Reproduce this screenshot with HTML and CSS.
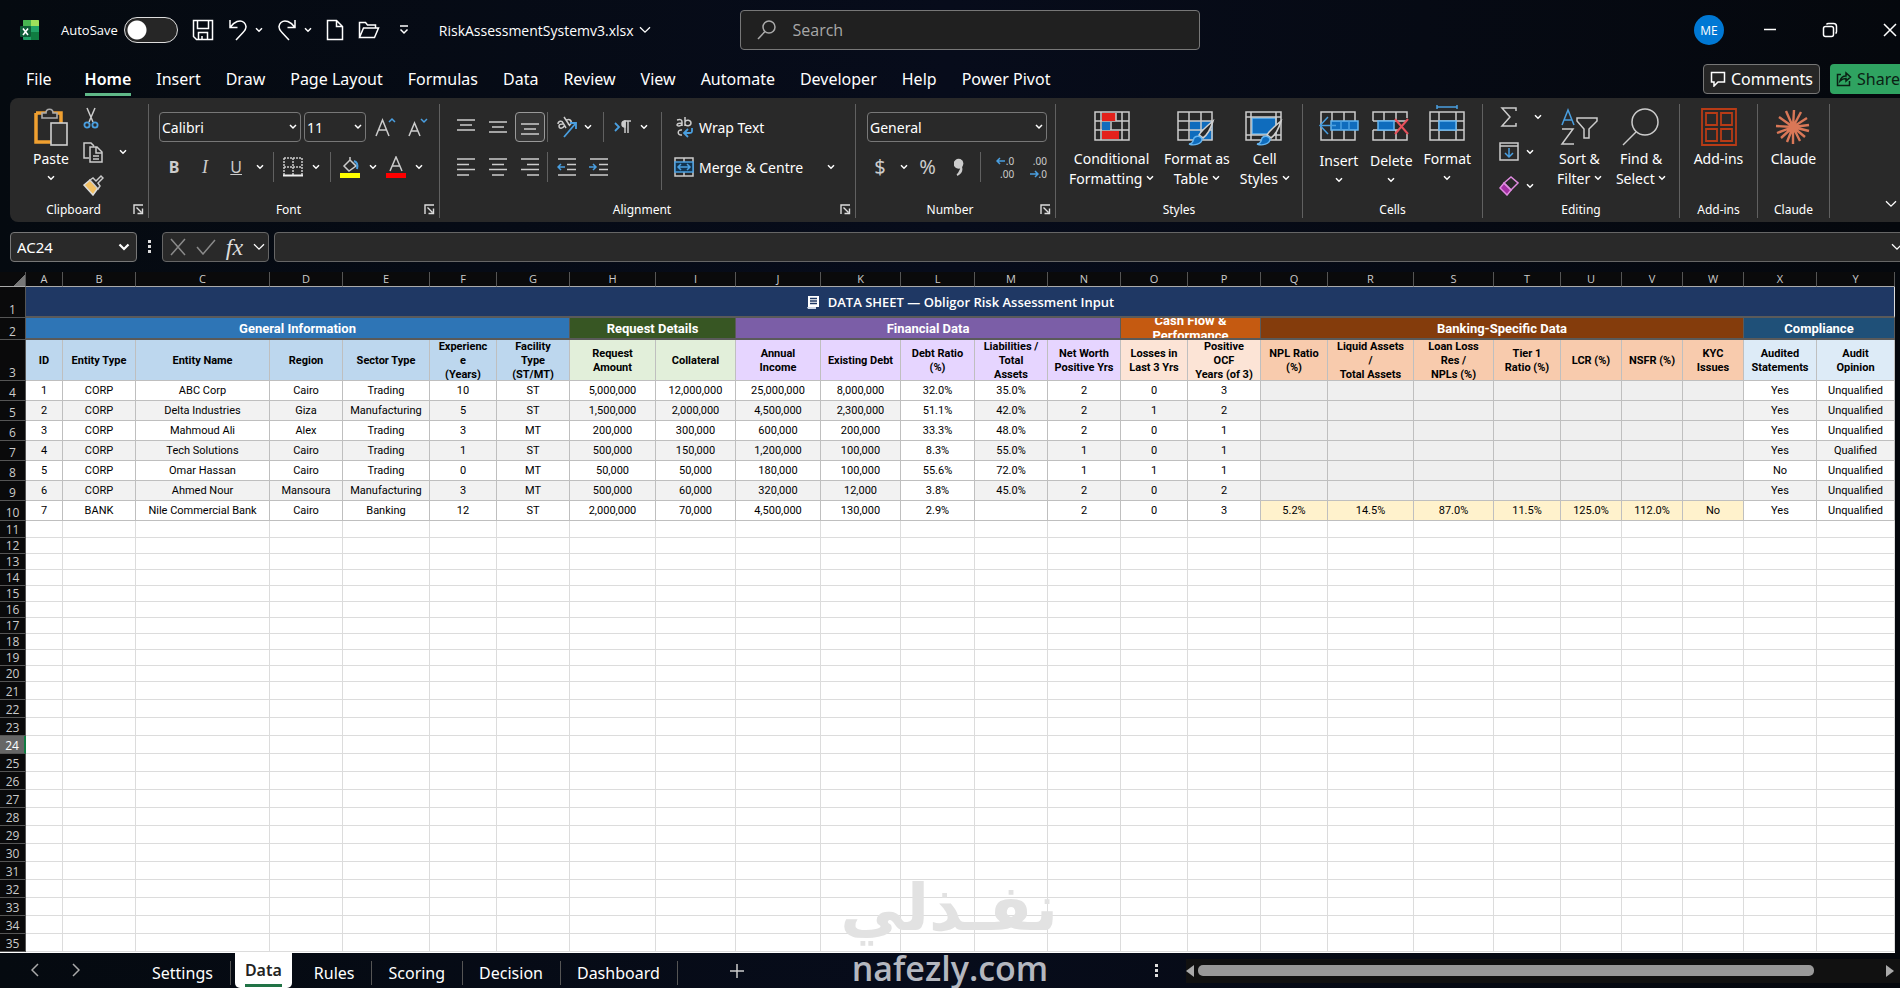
FILE: index.html
```html
<!DOCTYPE html>
<html lang="en">
<head>
    <meta charset="UTF-8">
    <meta name="viewport" content="width=device-width, initial-scale=1.0">
    <title>RiskAssessmentSystemv3.xlsx</title>
    <link rel="stylesheet" href="styles.css">
</head>
<body>
    <svg class="sprite" aria-hidden="true">
        <symbol id="chev" viewBox="0 0 8 6"><path d="M1 1.2l3 3 3-3" fill="none" stroke="currentColor" stroke-width="1.5"/></symbol>
        <symbol id="chev-lg" viewBox="0 0 12 8"><path d="M1 1.2l5 5 5-5" fill="none" stroke="currentColor" stroke-width="1.3"/></symbol>
        <symbol id="launch" viewBox="0 0 11 11"><path d="M1 10V1h9M3.500 3.500l5 5M9.500 4.500v5h-5" fill="none" stroke="currentColor" stroke-width="1.4"/></symbol>
        <symbol id="brush" viewBox="0 0 28 28"><path d="M26 2c-6 5-12 10-14 14l4 3C20 16 24 9 26 2z" fill="#292929" stroke="#d0d0d0" stroke-width="1.600"/><path d="M2 25c4 0 4-3 5-6 2-3 7-2 8 1 0 5-8 7-13 5z" fill="#0f6cbd" stroke="#65b5f0" stroke-width="1.400"/></symbol>
    </svg>

    <header class="titlebar">
        <svg class="logo" width="20" height="22" viewBox="0 0 20 22"><rect x="3" y="1" width="16" height="20" rx="1" fill="#21a366"/><path d="M11 1h7a1 1 0 0 1 1 1v5h-8z" fill="#9ee05b"/><path d="M3 2a1 1 0 0 1 1-1h7v6H3z" fill="#46b450"/><path d="M11 13h8v7a1 1 0 0 1-1 1h-7z" fill="#107c41"/><rect x="0" y="7" width="11" height="11" rx="1" fill="#0e5c36"/><path d="M3 9.500l5 6.500M8 9.500L3 16" stroke="#fff" stroke-width="1.600"/></svg>
        <label class="autosave">AutoSave <input type="checkbox" class="toggle"></label>
        <button class="tool" aria-label="Save"><svg width="22" height="22" viewBox="0 0 22 22"><path d="M1.500 1.500h19v19h-16l-3-3zM5.500 1.500v8h11v-8M6.500 20.500v-7h9v7M10 17v3"/></svg></button>
        <button class="tool" aria-label="Undo"><svg width="20" height="22" viewBox="0 0 20 22"><path d="M2 1v7.500h7.500M2.500 8C6 3 12 0 16 3.500c4 4 1 8-1 10L8 21"/></svg><svg class="chev"><use href="#chev"/></svg></button>
        <button class="tool" aria-label="Redo"><svg width="20" height="22" viewBox="0 0 20 22"><path d="M18 1v7.500h-7.500M17.500 8C14 3 8 0 4 3.500c-4 4-1 8 1 10L12 21"/></svg><svg class="chev"><use href="#chev"/></svg></button>
        <button class="tool" aria-label="New"><svg width="18" height="22" viewBox="0 0 18 22"><path d="M1.500 1.500h9l6 6v13h-15zM10.500 1.500v6h6"/></svg></button>
        <button class="tool open" aria-label="Open"><svg width="22" height="18" viewBox="0 0 22 18"><path d="M1.500 16V1.500h6l2 2.500h8v3M1.500 16.500L5.500 7h15l-4 9.500z"/></svg></button>
        <button class="tool more" aria-label="Customise toolbar"><svg width="12" height="10" viewBox="0 0 12 10"><path d="M2 1h8M2.500 4.500L6 8l3.500-3.500"/></svg></button>
        <button class="filename">RiskAssessmentSystemv3.xlsx <svg class="chev-lg"><use href="#chev-lg"/></svg></button>
        <label class="search">
            <svg width="20" height="20" viewBox="0 0 20 20"><circle cx="12" cy="7" r="6"/><path d="M8 11.500L1 19"/></svg>
            <input type="search" placeholder="Search" aria-label="Search">
        </label>
        <button class="avatar">ME</button>
        <button class="win" aria-label="Minimise"><svg width="16" height="16" viewBox="0 0 16 16"><path d="M2 7.500h12"/></svg></button>
        <button class="win" aria-label="Restore"><svg width="16" height="16" viewBox="0 0 16 16"><rect x="1.500" y="4.500" width="10" height="10" rx="2"/><path d="M4.500 2.500c.5-1 1-1 2-1h5c2 0 3 1 3 3v5c0 1 0 1.500-1 2"/></svg></button>
        <button class="win" aria-label="Close"><svg width="16" height="16" viewBox="0 0 16 16"><path d="M2 2l12 12M14 2L2 14"/></svg></button>
    </header>

    <nav class="menu">
        <a href="#">File</a>
        <a href="#" class="active">Home</a>
        <a href="#">Insert</a>
        <a href="#">Draw</a>
        <a href="#">Page Layout</a>
        <a href="#">Formulas</a>
        <a href="#">Data</a>
        <a href="#">Review</a>
        <a href="#">View</a>
        <a href="#">Automate</a>
        <a href="#">Developer</a>
        <a href="#">Help</a>
        <a href="#">Power Pivot</a>
        <div class="actions">
            <button class="comments"><svg width="16" height="16" viewBox="0 0 16 16"><path d="M1.500 1.500h13v9.500H8l-4 4v-4H1.500z"/></svg>Comments</button>
            <button class="share"><svg width="16" height="16" viewBox="0 0 16 16"><path d="M5 3.500H1.500v11h12V10M4 10c1-4 3-5 6-5V2l4.500 4-4.500 4V7.500C7 7.500 6 8 4 10z"/></svg>Share</button>
        </div>
    </nav>

    <section class="ribbon">
        <div class="group clipboard">
            <div class="body">
                <button class="big"><svg width="36" height="38" viewBox="0 0 36 38"><path d="M3 5h25v13M3 5v29h15" fill="none" stroke="#f0a030" stroke-width="3.500"/><path d="M9 10V5h4c0-5 7-5 7 0h4v5z" fill="#292929" stroke="#aaa" stroke-width="1.600"/><rect x="18" y="15" width="16" height="22" fill="#333" stroke="#d0d0d0" stroke-width="1.600"/></svg><span>Paste</span><svg class="chev"><use href="#chev"/></svg></button>
                <div class="stack">
                    <button class="ico" aria-label="Cut"><svg width="18" height="22" viewBox="0 0 18 22"><path d="M5 1l6 14M13 1L7 15" stroke="#ccc"/><g stroke="#4a9fe0" stroke-width="1.800"><circle cx="5" cy="18" r="2.600"/><circle cx="13" cy="18" r="2.600"/></g></svg></button>
                    <button class="ico" aria-label="Copy"><svg width="22" height="22" viewBox="0 0 22 22"><path d="M7 17H2V2h7l3 3M8 6h7l5 5v10H8zM14 6v6h6M11 15h6M11 18h6" stroke="#ccc"/></svg><svg class="chev"><use href="#chev"/></svg></button>
                    <button class="ico" aria-label="Format painter"><svg width="22" height="22" viewBox="0 0 22 22"><path d="M2 11l6-5 8 8-5 7z" fill="#f2c063" stroke="#ddd"/><path d="M8 6l3-2 3 3 5-5 2 2-5 5 2 3-2 3z" fill="#292929" stroke="#ccc"/></svg></button>
                </div>
            </div>
            <div class="caption"><span>Clipboard</span><svg class="launch"><use href="#launch"/></svg></div>
        </div>

        <div class="group font">
            <div class="body rows">
                <div class="row">
                    <select class="face" aria-label="Font"><option>Calibri</option></select>
                    <select class="size" aria-label="Font size"><option>11</option></select>
                    <button class="ico wide" aria-label="Increase font size"><svg width="22" height="22" viewBox="0 0 22 22"><path d="M2 20L8.500 4 15 20M4.500 14h8" stroke="#ccc"/><path d="M15 6l3-3 3 3" stroke="#4a9fe0"/></svg></button>
                    <button class="ico wide" aria-label="Decrease font size"><svg width="22" height="22" viewBox="0 0 22 22"><path d="M3 20L8.500 7 14 20M5.500 15h6" stroke="#ccc"/><path d="M15 3l3 3 3-3" stroke="#4a9fe0"/></svg></button>
                </div>
                <div class="row styles-row">
                    <button class="letter"><b>B</b></button>
                    <button class="letter"><i>I</i></button>
                    <button class="letter"><u>U</u></button>
                    <svg class="chev"><use href="#chev"/></svg>
                    <span class="bar"></span>
                    <button class="ico" aria-label="Borders"><svg width="20" height="20" viewBox="0 0 20 20"><path d="M1 1h18v17M1 1v17M10 1v17M1 10h18" stroke="#ccc" stroke-dasharray="2 1"/><path d="M0 18.500h20" stroke="#eee" stroke-width="2"/></svg></button>
                    <svg class="chev"><use href="#chev"/></svg>
                    <span class="bar"></span>
                    <button class="ico" aria-label="Fill colour"><svg width="20" height="22" viewBox="0 0 20 22"><path d="M4 10l6-6 6 6-7 5zM10 4V1" stroke="#ccc"/><path d="M14 5c3 1 4 4 3 8" stroke="#4a9fe0" stroke-width="2"/><path d="M0 19.500h20" stroke="#ff0" stroke-width="5"/></svg></button>
                    <svg class="chev"><use href="#chev"/></svg>
                    <button class="ico" aria-label="Font colour"><svg width="20" height="22" viewBox="0 0 20 22"><path d="M4 15L10 1l6 14M6.500 10h7" stroke="#ccc"/><path d="M0 19.500h20" stroke="#f00" stroke-width="5"/></svg></button>
                    <svg class="chev"><use href="#chev"/></svg>
                </div>
            </div>
            <div class="caption"><span>Font</span><svg class="launch"><use href="#launch"/></svg></div>
        </div>

        <div class="group align">
            <div class="body">
                <div class="rows">
                    <div class="row">
                        <button class="sq" aria-label="Top align"><svg width="18" height="18" viewBox="0 0 18 18"><path d="M0 2h18M3 7h12M0 12h18"/></svg></button>
                        <button class="sq" aria-label="Middle align"><svg width="18" height="18" viewBox="0 0 18 18"><path d="M0 4h18M3 9h12M0 14h18"/></svg></button>
                        <button class="sq on" aria-label="Bottom align"><svg width="18" height="18" viewBox="0 0 18 18"><path d="M0 6h18M3 11h12M0 16h18"/></svg></button>
                        <span class="bar"></span>
                        <button class="sq" aria-label="Orientation"><svg width="22" height="22" viewBox="0 0 22 22"><path d="M2 8c0-3 4-4 5-1l3 5M8 10c-1 3-5 3-5 0 0-2 2-2 4-2M8 1l6 9M10 5c2-3 6-1 5 2 0 2-2 2-3 1"/><path d="M8 21L20 7M14 7h6v6" stroke="#4a9fe0" stroke-width="1.800"/></svg></button>
                        <svg class="chev"><use href="#chev"/></svg>
                        <span class="bar"></span>
                        <button class="sq" aria-label="Text direction"><svg width="18" height="16" viewBox="0 0 18 16"><path d="M1 4l4 4-4 4" stroke="#4a9fe0" stroke-width="1.800"/><path d="M11 14V2h6M14 2v12"/><path d="M11 2a3 3 0 0 0 0 6z" fill="#ccc"/></svg></button>
                        <svg class="chev"><use href="#chev"/></svg>
                    </div>
                    <div class="row">
                        <button class="sq" aria-label="Align left"><svg width="18" height="18" viewBox="0 0 18 18"><path d="M0 1h18M0 6.500h12M0 11.500h18M0 17h12"/></svg></button>
                        <button class="sq" aria-label="Centre"><svg width="18" height="18" viewBox="0 0 18 18"><path d="M0 1h18M3 6.500h12M0 11.500h18M3 17h12"/></svg></button>
                        <button class="sq" aria-label="Align right"><svg width="18" height="18" viewBox="0 0 18 18"><path d="M0 1h18M6 6.500h12M0 11.500h18M6 17h12"/></svg></button>
                        <span class="bar"></span>
                        <button class="sq" aria-label="Decrease indent"><svg width="20" height="18" viewBox="0 0 20 18"><path d="M1 1h18M10 6.500h9M10 11.500h9M1 17h18"/><path d="M8 9H1M4 6L1 9l3 3" stroke="#4a9fe0"/></svg></button>
                        <button class="sq" aria-label="Increase indent"><svg width="20" height="18" viewBox="0 0 20 18"><path d="M1 1h18M10 6.500h9M10 11.500h9M1 17h18"/><path d="M0 9h7M4 6l3 3-3 3" stroke="#4a9fe0"/></svg></button>
                    </div>
                </div>
                <span class="bar tall"></span>
                <div class="rows wrap">
                    <div class="row">
                        <button class="text"><svg width="20" height="22" viewBox="0 0 20 22"><path d="M3 4c4-1 5 0 5 2v4M8 7c-6 0-6 3-3 3 1 0 3-1 3-3M11 1v9M11 6c1-3 6-2 6 1s-5 4-6 1M8 14c-5-1-5 6 0 5" stroke="#ccc"/><path d="M18 12v3c0 2-1 2-3 2h-4M14 13l-4 4 4 4" stroke="#4a9fe0" stroke-width="1.800"/></svg>Wrap Text</button>
                    </div>
                    <div class="row">
                        <button class="text"><svg width="20" height="20" viewBox="0 0 20 20"><path d="M1 1h18v18H1zM10 1v4M10 15v4" stroke="#ccc"/><path d="M1 5h18v10H1z" fill="#13344f" stroke="#4a9fe0"/><path d="M4 10h12M7 7l-3 3 3 3M13 7l3 3-3 3" stroke="#4a9fe0"/></svg>Merge &amp; Centre</button>
                        <svg class="chev far"><use href="#chev"/></svg>
                    </div>
                </div>
            </div>
            <div class="caption"><span>Alignment</span><svg class="launch"><use href="#launch"/></svg></div>
        </div>

        <div class="group number">
            <div class="body rows">
                <div class="row"><select aria-label="Number format"><option>General</option></select></div>
                <div class="row">
                    <button class="glyph">$</button>
                    <svg class="chev"><use href="#chev"/></svg>
                    <button class="glyph pct">%</button>
                    <button class="sq" aria-label="Comma style"><svg width="12" height="18" viewBox="0 0 12 18"><path d="M3 17c4-2 5-5 4-8M6 2a4 4 0 1 0 1 7l1-2a4 4 0 0 0-2-5z" fill="#ccc" stroke-width="2"/></svg></button>
                    <span class="bar"></span>
                    <button class="sq decimal" aria-label="Increase decimal"><span><svg width="10" height="8" viewBox="0 0 10 8"><path d="M9 4H1M4 1L1 4l3 3"/></svg>.0</span><span>.00</span></button>
                    <button class="sq decimal" aria-label="Decrease decimal"><span>.00</span><span><svg width="10" height="8" viewBox="0 0 10 8"><path d="M1 4h8M6 1l3 3-3 3"/></svg>.0</span></button>
                </div>
            </div>
            <div class="caption"><span>Number</span><svg class="launch"><use href="#launch"/></svg></div>
        </div>

        <div class="group styles">
            <div class="body">
                <button class="big"><svg width="36" height="30" viewBox="0 0 36 30"><path d="M1 1h34v28H1zM1 10h34M1 19h34M7 1v28M28 1v28" stroke="#ccc"/><path d="M8 2h14v8H8zM8 20h17v8H8z" fill="#e3211b"/><path d="M8 11h8v8H8z" fill="#0f6cbd"/><path d="M22 2v8M17 11v8" stroke="#ccc"/></svg><span>Conditional<br>Formatting <svg class="chev"><use href="#chev"/></svg></span></button>
                <button class="big"><svg width="40" height="36" viewBox="0 0 40 36"><path d="M13 10h23v19H13z" fill="#0f6cbd"/><path d="M1 1h34v28H1zM1 10h34M1 19h34M12 1v28M24 1v28" stroke="#ccc"/><use href="#brush" x="10" y="8" width="28" height="28"/></svg><span>Format as<br>Table <svg class="chev"><use href="#chev"/></svg></span></button>
                <button class="big"><svg width="40" height="36" viewBox="0 0 40 36"><path d="M7 7h24v16H7z" fill="#0f6cbd" stroke="#65b5f0"/><path d="M1 1h35v28H1zM1 6h35M6 1v28M31 1v28M1 24h35" stroke="#ccc"/><use href="#brush" x="10" y="8" width="28" height="28"/></svg><span>Cell<br>Styles <svg class="chev"><use href="#chev"/></svg></span></button>
            </div>
            <div class="caption"><span>Styles</span></div>
        </div>

        <div class="group cells">
            <div class="body">
                <button class="big"><svg width="40" height="30" viewBox="0 0 40 30"><path d="M2 1h34v28H2zM13 1v28M25 1v28" stroke="#ccc"/><path d="M12 10h27v9H12z" fill="#0f6cbd" stroke="#65b5f0"/><path d="M1 14.500h16M9 6l-8 8.500L9 23M22 10v9M30 10v9" stroke="#4a9fe0"/></svg><span>Insert</span><svg class="chev"><use href="#chev"/></svg></button>
                <button class="big"><svg width="38" height="30" viewBox="0 0 38 30"><path d="M1 10V1h34v6M1 10h34M1 19v10h34v-6M1 19h26M12 1v9M24 1v9M12 19v10M24 19v10" stroke="#ccc"/><path d="M6 10h16v9H6z" fill="#0f6cbd" stroke="#65b5f0"/><path d="M23 8l13 15M36 8L23 23" stroke="#e8515b" stroke-width="2"/></svg><span>Delete</span><svg class="chev"><use href="#chev"/></svg></button>
                <button class="big fmt"><svg width="36" height="36" viewBox="0 0 36 36"><path d="M1 7h34v28H1zM1 16h34M1 25h34M10 7v28M27 7v28" stroke="#ccc"/><path d="M10 16h17v9H10z" fill="#0f6cbd" stroke="#65b5f0"/><path d="M8 2h20M8 0v4M28 0v4" stroke="#4a9fe0"/></svg><span>Format</span><svg class="chev"><use href="#chev"/></svg></button>
            </div>
            <div class="caption"><span>Cells</span></div>
        </div>

        <div class="group editing">
            <div class="body">
                <div class="stack">
                    <button class="ico" aria-label="Sum"><svg width="20" height="20" viewBox="0 0 20 20"><path d="M17 4V1H3l8 9-8 9h14v-3" stroke="#ccc"/></svg><svg class="chev"><use href="#chev"/></svg></button>
                    <button class="ico" aria-label="Fill"><svg width="20" height="20" viewBox="0 0 20 20"><path d="M1 1h18v17H1zM1 4h18" stroke="#ccc"/><path d="M10 6v9M6 11l4 4 4-4" stroke="#4a9fe0"/></svg><svg class="chev"><use href="#chev"/></svg></button>
                    <button class="ico" aria-label="Clear"><svg width="20" height="20" viewBox="0 0 20 20"><path d="M1 12l4-5 7 7-4 5z" fill="#a42fa4" stroke="#e08be0"/><path d="M5 7l7-6 7 6-7 7z" stroke="#e08be0"/></svg><svg class="chev"><use href="#chev"/></svg></button>
                </div>
                <button class="big"><svg width="38" height="38" viewBox="0 0 38 38"><path d="M2 17L8 2l6 15M4 12h8" stroke="#4a9fe0"/><path d="M2 21h11L2 36h12M17 10h20v3l-8 8v9h-5v-9l-7-8z" stroke="#ccc"/></svg><span>Sort &amp;<br>Filter <svg class="chev"><use href="#chev"/></svg></span></button>
                <button class="big"><svg width="38" height="38" viewBox="0 0 38 38"><circle cx="23" cy="14" r="13" stroke="#ccc"/><path d="M14 24L1 37" stroke="#ccc"/></svg><span>Find &amp;<br>Select <svg class="chev"><use href="#chev"/></svg></span></button>
            </div>
            <div class="caption"><span>Editing</span></div>
        </div>

        <div class="group addins">
            <div class="body">
                <button class="big"><svg width="36" height="38" viewBox="0 0 36 38"><path d="M1 1h34v36H1zM5 5h11v12H5zM20 5h11v12H20zM5 21h11v12H5zM20 21h11v12H20z" stroke="#b83b16" stroke-width="1.800"/></svg><span>Add-ins</span></button>
            </div>
            <div class="caption"><span>Add-ins</span></div>
        </div>

        <div class="group claude">
            <div class="body">
                <button class="big"><svg width="36" height="38" viewBox="0 0 36 38"><path d="M18 19L11 3M18 19L19 2M18 19L26 4M18 19l14-9M18 19l16-2M18 19l16 4M18 19l12 10M18 19l7 14M18 19l0 17M18 19l-6 15M18 19L6 30M18 19L2 25M18 19L1 18M18 19L4 9" stroke="#d97757" stroke-width="2.400"/></svg><span>Claude</span></button>
            </div>
            <div class="caption"><span>Claude</span></div>
        </div>
        <button class="collapse" aria-label="Collapse ribbon"><svg class="chev-lg"><use href="#chev-lg"/></svg></button>
    </section>

    <section class="formula">
        <select class="cellname" aria-label="Name box"><option>AC24</option></select>
        <svg class="dots" width="3" height="14" viewBox="0 0 3 14"><path d="M0 0h3v3H0zM0 5h3v3H0zM0 10h3v3H0z"/></svg>
        <div class="fx">
            <svg width="16" height="18" viewBox="0 0 16 18"><path d="M1 1l14 16M15 1L1 17" stroke="#8a8a8a"/></svg>
            <svg width="20" height="16" viewBox="0 0 20 16"><path d="M1 8l6 7L19 1" stroke="#8a8a8a"/></svg>
            <i>fx</i>
            <svg class="chev-lg"><use href="#chev-lg"/></svg>
        </div>
        <label class="entry"><input type="text" aria-label="Formula bar"><svg class="chev-lg"><use href="#chev-lg"/></svg></label>
    </section>

    <main class="sheet">
        <table>
            <colgroup id="cols"></colgroup>
            <thead id="letters"></thead>
            <tbody id="grid"></tbody>
        </table>
    </main>

    <footer class="tabs">
        <div class="arrows">
            <button aria-label="Previous sheet"><svg width="8" height="14" viewBox="0 0 8 14"><path d="M7 1L1 7l6 6"/></svg></button>
            <button aria-label="Next sheet"><svg width="8" height="14" viewBox="0 0 8 14"><path d="M1 1l6 6-6 6"/></svg></button>
        </div>
        <button class="tab">Settings</button>
        <button class="tab current"><span>Data</span></button>
        <button class="tab">Rules</button>
        <button class="tab">Scoring</button>
        <button class="tab">Decision</button>
        <button class="tab">Dashboard</button>
        <button class="add" aria-label="New sheet"><svg width="14" height="14" viewBox="0 0 14 14"><path d="M7 0v14M0 7h14"/></svg></button>
        <svg class="dots" width="3" height="14" viewBox="0 0 3 14"><path d="M0 0h3v3H0zM0 5h3v3H0zM0 10h3v3H0z"/></svg>
        <div class="scroll">
            <svg width="8" height="12" viewBox="0 0 8 12"><path d="M8 0v12L0 6z"/></svg>
            <div class="track"><div class="thumb"></div></div>
            <svg width="8" height="12" viewBox="0 0 8 12"><path d="M0 0v12l8-6z"/></svg>
        </div>
    </footer>

    <div class="watermark">
        <div class="ar" lang="ar" dir="rtl">نفـذلي</div>
        <div class="site">nafezly.com</div>
    </div>

    <script>
        // last column takes the space that is left
        const widths = [26, 37, 73, 134, 73, 87, 67, 73, 86, 80, 85, 80, 74, 73, 73, 67, 73, 67, 86, 80, 67, 61, 61, 61, 73];
        const letters = "ABCDEFGHIJKLMNOPQRSTUVWXY".split("");

        const groups = [
            ["General Information", 7, "general"],
            ["Request Details", 2, "request"],
            ["Financial Data", 5, "financial"],
            ["Cash Flow &<br>Performance", 2, "cash"],
            ["Banking-Specific Data", 7, "banking"],
            ["Compliance", 2, "compliance"]
        ];

        const heads = ["ID", "Entity Type", "Entity Name", "Region", "Sector Type", "Experienc<br>e<br>(Years)", "Facility<br>Type<br>(ST/MT)",
            "Request<br>Amount", "Collateral",
            "Annual<br>Income", "Existing Debt", "Debt Ratio<br>(%)", "Liabilities /<br>Total<br>Assets", "Net Worth<br>Positive Yrs",
            "Losses in<br>Last 3 Yrs", "Positive<br>OCF<br>Years (of 3)",
            "NPL Ratio<br>(%)", "Liquid Assets<br>/<br>Total Assets", "Loan Loss<br>Res /<br>NPLs (%)", "Tier 1<br>Ratio (%)", "LCR (%)", "NSFR (%)", "KYC<br>Issues",
            "Audited<br>Statements", "Audit<br>Opinion"];

        const blank = ["", "", "", "", "", "", ""];
        const rows = [
            [1, "CORP", "ABC Corp", "Cairo", "Trading", 10, "ST", "5,000,000", "12,000,000", "25,000,000", "8,000,000", "32.0%", "35.0%", 2, 0, 3, ...blank, "Yes", "Unqualified"],
            [2, "CORP", "Delta Industries", "Giza", "Manufacturing", 5, "ST", "1,500,000", "2,000,000", "4,500,000", "2,300,000", "51.1%", "42.0%", 2, 1, 2, ...blank, "Yes", "Unqualified"],
            [3, "CORP", "Mahmoud Ali", "Alex", "Trading", 3, "MT", "200,000", "300,000", "600,000", "200,000", "33.3%", "48.0%", 2, 0, 1, ...blank, "Yes", "Unqualified"],
            [4, "CORP", "Tech Solutions", "Cairo", "Trading", 1, "ST", "500,000", "150,000", "1,200,000", "100,000", "8.3%", "55.0%", 1, 0, 1, ...blank, "Yes", "Qualified"],
            [5, "CORP", "Omar Hassan", "Cairo", "Trading", 0, "MT", "50,000", "50,000", "180,000", "100,000", "55.6%", "72.0%", 1, 1, 1, ...blank, "No", "Unqualified"],
            [6, "CORP", "Ahmed Nour", "Mansoura", "Manufacturing", 3, "MT", "500,000", "60,000", "320,000", "12,000", "3.8%", "45.0%", 2, 0, 2, ...blank, "Yes", "Unqualified"],
            [7, "BANK", "Nile Commercial Bank", "Cairo", "Banking", 12, "ST", "2,000,000", "70,000", "4,500,000", "130,000", "2.9%", "", 2, 0, 3, "5.2%", "14.5%", "87.0%", "11.5%", "125.0%", "112.0%", "No", "Yes", "Unqualified"]
        ];

        document.getElementById("cols").innerHTML = widths.map(w => `<col style="width:${w}px">`).join("") + "<col>";
        document.getElementById("letters").innerHTML =
            `<tr><th class="corner"></th>${letters.map(l => `<th>${l}</th>`).join("")}</tr>`;

        const pageIcon = '<svg width="14" height="15" viewBox="0 0 14 15"><path d="M2 1h11v11H2z" fill="#fff"/><path d="M1 12h9v2H2z" fill="#cfd8e6"/><path d="M4 3.500h7M4 6h7M4 8.500h7" stroke="#1f3864"/></svg>';
        let html = `<tr class="title"><th>1</th><td colspan="25">${pageIcon}DATA SHEET — Obligor Risk Assessment Input</td></tr>`;

        html += `<tr class="groups"><th>2</th>` +
            groups.map(g => `<td colspan="${g[1]}" class="${g[2]}"><div>${g[0]}</div></td>`).join("") + "</tr>";

        const kinds = groups.flatMap(g => Array(g[1]).fill(g[2]));
        html += `<tr class="heads"><th>3</th>` +
            heads.map((h, i) => `<td class="${kinds[i]}"><div>${h}</div></td>`).join("") + "</tr>";

        rows.forEach((row, r) => {
            html += `<tr class="data"><th>${r + 4}</th>` + row.map((v, i) => {
                let cls = "";
                if (kinds[i] === "banking") cls = v === "" ? "na" : "bank";
                if (i === 11) cls = "calc";
                return `<td class="${cls}">${v}</td>`;
            }).join("") + "</tr>";
        });

        for (let r = 11; r <= 35; r++) {
            const cls = r === 24 ? "empty selected" : r > 20 ? "empty" : r === 11 ? "first" : "short";
            html += `<tr class="${cls}"><th>${r}</th>${"<td></td>".repeat(25)}</tr>`;
        }
        document.getElementById("grid").innerHTML = html;
    </script>
</body>
</html>
```
FILE: styles.css
```css
* {
    box-sizing: border-box;
}

body {
    margin: 0;
    min-height: 100vh;
    display: flex;
    flex-direction: column;
    position: relative;
    overflow: hidden;
    font-family: "Noto Sans", "Open Sans", sans-serif;
    font-size: 14px;
    color: #fff;
    background: linear-gradient(90deg, #050a10, #070c1b 50%, #05080d);
}

button,
input,
select {
    font: inherit;
    color: inherit;
    background: none;
    border: 0;
    padding: 0;
    margin: 0;
}

svg {
    flex-shrink: 0;
    fill: none;
    stroke-width: 1.5;
}

.sprite {
    position: absolute;
    width: 0;
    height: 0;
}

.chev {
    width: 8px;
    height: 6px;
}

.chev-lg {
    width: 12px;
    height: 8px;
}

/* title bar */
.titlebar {
    display: flex;
    align-items: center;
    height: 60px;
    padding-left: 20px;
    font-family: "Open Sans", sans-serif;
}

.autosave {
    display: flex;
    align-items: center;
    gap: 6px;
    margin-left: 21px;
    font-size: 13px;
}

.toggle {
    appearance: none;
    width: 54px;
    height: 26px;
    border: 1px solid #ddd;
    border-radius: 13px;
    background: radial-gradient(circle at 12px 12px, #fff 9px, #262626 10px);
}

.tool {
    display: flex;
    align-items: center;
    gap: 7px;
    margin-left: 14px;
}

.tool svg {
    stroke: #fff;
}

.tool.more {
    margin-left: 18px;
    margin-right: 29px;
}

.filename {
    display: flex;
    align-items: center;
    gap: 5px;
}

.search {
    display: flex;
    align-items: center;
    gap: 16px;
    width: 460px;
    height: 40px;
    margin-left: 89px;
    padding: 0 16px;
    border: 1px solid #777;
    border-radius: 4px;
    background: #202020;
    font-size: 16px;
}

.search svg {
    stroke: #aaa;
}

.search input {
    flex: 1;
    outline: 0;
}

.search input::placeholder {
    color: #a8a8a8;
}

.avatar {
    width: 30px;
    height: 30px;
    margin-left: auto;
    margin-right: 38px;
    border-radius: 50%;
    background: #0078d4;
    font-size: 12px;
}

.win {
    margin-right: 44px;
    line-height: 0;
}

.win:last-child {
    margin-right: 2px;
}

.win svg {
    stroke: #fff;
}

/* ribbon tabs */
.menu {
    display: flex;
    align-items: center;
    height: 38px;
    padding-left: 26px;
    gap: 25px;
    font-size: 16px;
}

.menu a {
    color: #fff;
    text-decoration: none;
    line-height: 28px;
    padding-top: 2px;
    border-bottom: 3px solid transparent;
}

.menu .active {
    font-weight: 600;
    margin-left: 8px;
    border-color: #5fb888;
}

.actions {
    display: flex;
    gap: 10px;
    margin-left: auto;
    margin-right: -6px;
}

.comments,
.share {
    display: flex;
    align-items: center;
    gap: 5px;
    height: 30px;
    padding: 0 6px;
    border-radius: 4px;
}

.comments {
    border: 1px solid #777;
    background: #262626;
}

.comments svg {
    stroke: #fff;
}

.share {
    background: #2fa361;
    color: #0b2014;
}

.share svg {
    stroke: #0b2014;
}

/* ribbon */
.ribbon {
    display: flex;
    height: 124px;
    margin-left: 10px;
    padding: 6px 0 4px;
    border-radius: 8px 0 0 8px;
    background: #292929;
}

.group {
    display: flex;
    flex-direction: column;
    height: 114px;
    border-right: 1px solid #606060;
}

.body {
    display: flex;
    flex: 1;
}

.caption {
    display: flex;
    align-items: center;
    height: 18px;
    padding: 0 4px;
    font-size: 12px;
}

.caption span {
    flex: 1;
    text-align: center;
}

.launch {
    width: 11px;
    height: 11px;
    color: #ddd;
}

.clipboard { width: 139px; }
.font { width: 291px; }
.align { width: 416px; }
.number { width: 200px; }
.styles { width: 247px; }
.cells { width: 180px; }
.editing { width: 197px; }
.addins { width: 78px; }
.claude { width: 72px; }

.big {
    display: flex;
    flex-direction: column;
    align-items: center;
    line-height: 20px;
}

.big > svg:first-child {
    height: 38px;
    margin-top: 4px;
    margin-bottom: 3px;
}

.big .chev {
    margin-top: 6px;
}

.big span .chev {
    margin: 0 0 3px;
}

.big path,
.ico path {
    fill-rule: evenodd;
}

.stack {
    display: flex;
    flex-direction: column;
    justify-content: space-between;
    padding: 3px 0 4px;
}

.ico {
    display: flex;
    align-items: center;
    gap: 15px;
}

.clipboard .body {
    gap: 13px;
    padding-left: 23px;
}

.rows {
    display: flex;
    flex-direction: column;
    gap: 10px;
    padding-top: 8px;
}

.row {
    display: flex;
    align-items: center;
    height: 30px;
}

.row select,
.cellname {
    appearance: none;
    height: 30px;
    padding: 0 6px 0 2px;
    border: 1px solid #777;
    border-radius: 4px;
    background: #292929 url("data:image/svg+xml,%3Csvg xmlns='http://www.w3.org/2000/svg' viewBox='0 0 8 6' width='8' height='6'%3E%3Cpath d='M1 1l3 3 3-3' fill='none' stroke='white' stroke-width='1.5'/%3E%3C/svg%3E") no-repeat right 3px center;
}

.font .body {
    padding-left: 10px;
}

.row .face {
    width: 142px;
    margin-right: 3px;
}

.row .size {
    width: 62px;
}

.wide {
    margin-left: 8px;
    width: 24px;
}

.bar {
    width: 1px;
    height: 30px;
    background: #606060;
}

.bar.tall {
    height: 78px;
    margin-top: 8px;
}

.styles-row {
    justify-content: space-between;
    padding: 0 16px 0 4px;
}

.letter {
    width: 22px;
    font-size: 16px;
    color: #ccc;
}

.letter i,
.fx i {
    font-family: "Liberation Serif", serif;
    font-size: 18px;
}

.align .rows .row {
    gap: 2px;
}

.align .body > .rows {
    padding-left: 11px;
    width: 221px;
}

.align .body > .rows.wrap {
    padding-left: 12px;
    width: auto;
}

.sq {
    display: flex;
    align-items: center;
    justify-content: center;
    width: 30px;
    height: 30px;
}

.sq svg {
    stroke: #ccc;
}

.sq.on {
    border: 1px solid #999;
    border-radius: 4px;
    background: #353535;
}

.align .bar + .sq {
    margin-left: 2px;
}

.align .chev + .bar {
    margin-left: 9px;
}

.text {
    display: flex;
    align-items: center;
    gap: 5px;
}

.chev.far {
    margin-left: 22px;
}

.number .body {
    padding: 8px 8px 0 11px;
}

.number select {
    width: 100%;
}

.number .row {
    justify-content: space-between;
}

.number .sq {
    width: 26px;
}

.number .decimal {
    flex-direction: column;
    align-items: flex-end;
    font-size: 10px;
    line-height: 14px;
    color: #ccc;
}

.decimal span {
    display: flex;
    align-items: center;
    height: 13px;
}

.number .decimal svg {
    stroke: #4a9fe0;
}

.glyph {
    width: 26px;
    font-size: 20px;
    line-height: 30px;
    color: #ccc;
}

.styles .body {
    gap: 10px;
    padding-left: 13px;
}

.styles .big > svg:first-child {
    height: 36px;
    margin-top: 7px;
    margin-bottom: 2px;
}

.styles .big:first-child > svg:first-child {
    height: 30px;
    margin-bottom: 8px;
}

.cells .body {
    gap: 11px;
    padding-left: 16px;
}

.cells .big > svg:first-child {
    height: 30px;
    margin-top: 7px;
    margin-bottom: 10px;
}

.cells .fmt > svg:first-child {
    height: 36px;
    margin-top: 1px;
    margin-bottom: 8px;
}

.editing .body {
    gap: 14px;
    padding-left: 16px;
}

.editing .ico {
    gap: 7px;
}

.editing .ico:first-child {
    gap: 15px;
}

.editing .stack {
    width: 44px;
}

.addins .body,
.claude .body {
    justify-content: center;
}

.collapse {
    align-self: flex-end;
    margin-left: auto;
    margin-right: 3px;
    padding-bottom: 6px;
}

/* formula bar */
.formula {
    display: flex;
    align-items: center;
    height: 50px;
    padding-left: 10px;
    font-size: 15px;
}

.cellname {
    width: 127px;
    padding-left: 6px;
    background-position: right 6px center;
    background-size: 12px 9px;
}

.dots {
    margin: 0 11px;
    fill: #ddd;
}

.fx {
    display: flex;
    align-items: center;
    justify-content: space-between;
    width: 107px;
    height: 30px;
    margin-right: 5px;
    padding: 0 3px 0 7px;
    border: 1px solid #666;
    border-radius: 4px;
    background: #292929;
}

.fx i {
    font-size: 24px;
    color: #ddd;
}

.entry {
    flex: 1;
    display: flex;
    align-items: center;
    height: 30px;
    margin-right: -4px;
    border: 1px solid #666;
    border-radius: 4px;
    background: #292929;
}

.entry input {
    flex: 1;
    outline: 0;
}

/* grid */
.sheet {
    flex: 1;
    margin-right: 5px;
    background: #fff;
}

table {
    width: 100%;
    table-layout: fixed;
    border-collapse: separate;
    border-spacing: 0;
    font-family: Roboto, sans-serif;
    font-size: 11px;
    color: #000;
}

th,
td {
    padding: 0;
    text-align: center;
    overflow: hidden;
    white-space: nowrap;
    border-right: 1px solid #dcdcdc;
    border-bottom: 1px solid #dcdcdc;
}

th {
    font-family: "Open Sans", sans-serif;
    font-size: 12px;
    font-weight: 400;
    line-height: 14px;
    color: #ccc;
    background: #0a0a0b;
    border-color: #555;
}

thead th {
    height: 15px;
    font-size: 11px;
    border-bottom-color: #aaa;
}

.corner {
    background: linear-gradient(135deg, #0a0a0b 70%, #777 70%);
}

tbody th {
    vertical-align: bottom;
}

.title td {
    height: 31px;
    font-family: "Open Sans", sans-serif;
    font-size: 13px;
    font-weight: 600;
    color: #fff;
    background: #1f3864;
    border-bottom: 2px solid #5a5a5a;
}

.title svg {
    margin-right: 8px;
    vertical-align: -3px;
}

.groups td {
    height: 22px;
    font-size: 13px;
    font-weight: 700;
    color: #fff;
    border-right-color: #5a5a5a;
    border-bottom: 2px solid #5a5a5a;
}

.groups div {
    display: flex;
    align-items: center;
    justify-content: center;
    height: 20px;
    line-height: 15px;
    overflow: hidden;
}

.groups .general { background: #2e75b6; }
.groups .request { background: #375623; }
.groups .financial { background: #7b5ea7; }
.groups .cash { background: #c55a11; }
.groups .banking { background: #843c0c; }
.groups .compliance { background: #1f5078; }

.heads td {
    height: 41px;
    font-weight: 700;
    line-height: 14px;
    border-color: #bfbfbf;
}

.heads div {
    display: flex;
    align-items: center;
    justify-content: center;
    height: 40px;
    padding-top: 1px;
    overflow: hidden;
}

.heads .general { background: #bdd7ee; }
.heads .request { background: #e2efda; }
.heads .financial { background: #e6d5ff; }
.heads .cash { background: #fce4d6; }
.heads .banking { background: #f8cbad; }
.heads .compliance { background: #ddebf7; }

.data td {
    height: 20px;
    border-color: #bfbfbf;
}

.data:nth-child(odd) td {
    background: #f2f2f2;
}

.data .na,
.data:nth-child(odd) .na {
    background: #efefef;
}

.data .calc,
.data:nth-child(odd) .calc {
    background: #fff;
}

.data .bank {
    background: #fff2cc;
}

.empty td {
    height: 18px;
}

.first td {
    height: 17px;
}

.short td {
    height: 16px;
}

.selected th {
    background: #666;
    color: #fff;
    border-right: 2px solid #107c41;
}

/* sheet tabs */
.tabs {
    display: flex;
    align-items: center;
    height: 35px;
    font-size: 16px;
}

.arrows {
    display: flex;
    gap: 33px;
    width: 136px;
    padding-left: 31px;
}

.arrows svg {
    stroke: #aaa;
}

.tab {
    height: 24px;
    line-height: 24px;
    margin-top: 4px;
    padding: 0 17px 0 16px;
    border-right: 1px solid #555;
}

.tab.current {
    align-self: stretch;
    height: auto;
    margin: 0 6px 0 4px;
    padding: 3px 10px 0;
    border: 0;
    border-radius: 0 0 5px 5px;
    background: #fff;
    color: #222;
    font-weight: 600;
}

.current span {
    display: block;
    height: 30px;
    line-height: 26px;
    border-bottom: 3px solid #217346;
}

.add {
    margin-left: 52px;
    line-height: 0;
}

.add svg {
    stroke: #ccc;
}

.tabs .dots {
    margin-left: auto;
    margin-right: 28px;
}

.scroll {
    display: flex;
    align-items: center;
    gap: 4px;
    flex: 0 1 714px;
    height: 24px;
    padding-right: 6px;
    background: #111;
}

.scroll svg {
    fill: #aaa;
}

.track {
    flex: 1;
}

.thumb {
    width: 90%;
    height: 11px;
    border-radius: 5px;
    background: #999;
}

/* watermark lies over the grid and the sheet tabs */
.watermark {
    position: absolute;
    left: 50%;
    bottom: 0;
    width: 216px;
    margin-left: -108px;
    text-align: center;
    pointer-events: none;
}

.ar {
    font: 700 64px/80px "DejaVu Sans", sans-serif;
    color: #e2e2e2;
    white-space: nowrap;
}

.site {
    font-family: "Open Sans", sans-serif;
    font-size: 34px;
    font-weight: 600;
    line-height: 40px;
    color: #b4b7bf;
}
```
